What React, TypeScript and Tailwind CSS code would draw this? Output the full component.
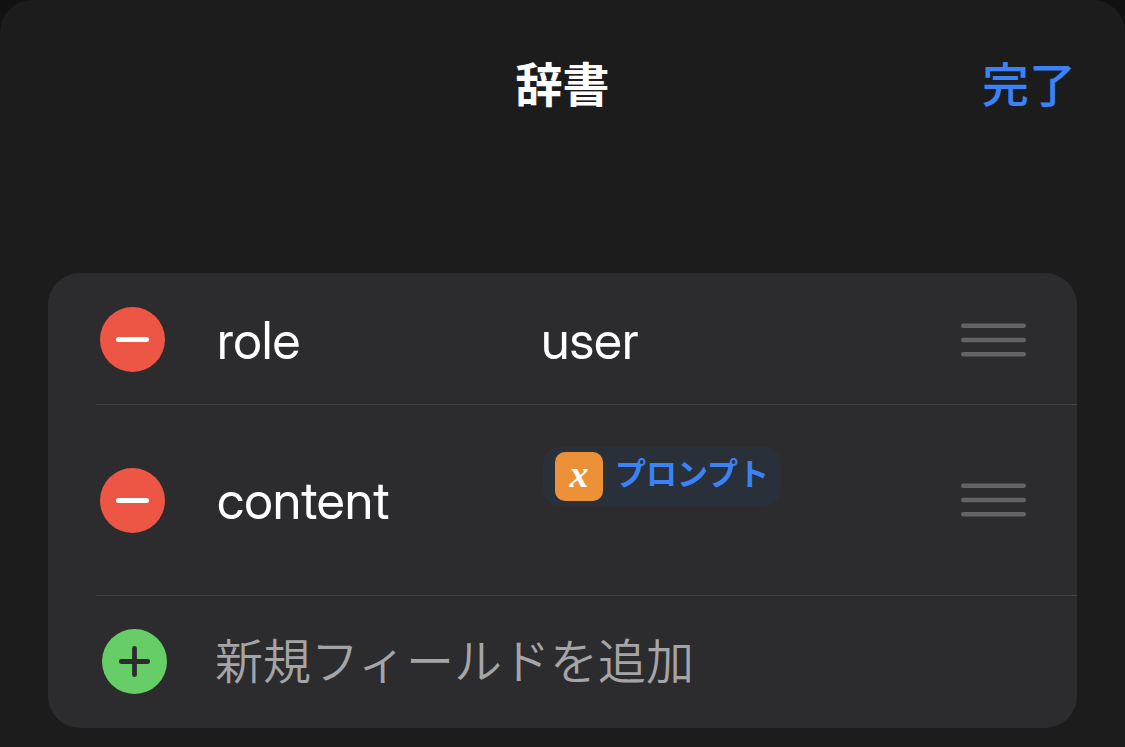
import React from "react";

type Field = {
  key: string;
  value: string;
  isVariable?: boolean;
};

const fields: Field[] = [
  { key: "role", value: "user" },
  { key: "content", value: "プロンプト", isVariable: true },
];

function MinusBadge() {
  return (
    <svg viewBox="0 0 65 65" className="block size-[65px]" aria-hidden="true">
      <circle cx="32.5" cy="32.5" r="32.5" fill="#ed5545" />
      <rect x="16" y="30" width="33" height="5" rx="2.5" fill="#fff" />
    </svg>
  );
}

function PlusBadge() {
  return (
    <svg viewBox="0 0 65 65" className="block size-[65px]" aria-hidden="true">
      <circle cx="32.5" cy="32.5" r="32.5" fill="#67ce67" />
      <path
        d="M32.5 19.3v26.4M19.3 32.5h26.4"
        stroke="#2c2c2e"
        strokeWidth="4.8"
        strokeLinecap="round"
      />
    </svg>
  );
}

function DragHandle() {
  return (
    <svg viewBox="0 0 65 34" className="block h-[34px] w-[65px]" aria-hidden="true">
      <g fill="#636366">
        <rect x="0" y="0.5" width="65" height="4.4" rx="2.2" />
        <rect x="0" y="14.8" width="65" height="4.4" rx="2.2" />
        <rect x="0" y="29.1" width="65" height="4.4" rx="2.2" />
      </g>
    </svg>
  );
}

// Inline token for a variable used as a field value
function VariableChip({ name }: { name: string }) {
  return (
    <button
      type="button"
      className="flex items-center gap-3 rounded-2xl bg-[#29303a] py-[5px] pr-3 pl-3"
    >
      <span className="flex h-[49px] w-12 items-center justify-center rounded-[10px] bg-[#ed9138] pb-1 font-['Liberation_Serif',serif] text-[38px] leading-none font-bold text-white italic">
        x
      </span>
      <span className="pb-1 text-[31px] leading-11 font-bold text-[#3b82f7]">{name}</span>
    </button>
  );
}

function FieldRow({ field }: { field: Field }) {
  return (
    <li
      className={
        field.isVariable
          ? "ml-12 flex h-[191px] items-center border-b border-[#444446] pr-[51px] pl-1"
          : "ml-12 flex h-[132px] items-center border-b border-[#444446] pt-0.5 pr-[51px] pl-1"
      }
    >
      <button type="button" aria-label={`${field.key} を削除`} className="shrink-0">
        <MinusBadge />
      </button>
      <input
        type="text"
        aria-label="キー"
        defaultValue={field.key}
        className="ml-[52px] h-16 w-[324px] min-w-0 bg-transparent pt-0.5 text-[52px] text-white outline-none"
      />
      <div className="min-w-0 flex-1">
        {field.isVariable ? (
          <div className="flex pb-12 pl-0.5">
            <VariableChip name={field.value} />
          </div>
        ) : (
          <input
            type="text"
            aria-label="値"
            defaultValue={field.value}
            className="block h-16 w-full bg-transparent pt-0.5 text-[52px] text-white outline-none"
          />
        )}
      </div>
      <button type="button" aria-label={`${field.key} を並べ替え`} className="shrink-0">
        <DragHandle />
      </button>
    </li>
  );
}

export default function App() {
  return (
    <div className="min-h-screen bg-[#111111] font-['Inter_Display',Inter,'Noto_Sans_CJK_JP',sans-serif]">
      <main className="min-h-screen rounded-t-[32px] bg-[#1c1c1c] px-12 pb-5">
        <header className="grid grid-cols-[1fr_auto_1fr] items-center pt-[51px]">
          <h1 className="col-start-2 text-[47px] leading-[68px] font-bold text-white">
            辞書
          </h1>
          <button
            type="button"
            className="mr-px justify-self-end text-[47px] leading-[68px] font-medium text-[#3b82f7]"
          >
            完了
          </button>
        </header>

        <ul className="mt-[154px] overflow-hidden rounded-[32px] bg-[#2c2c2e]">
          {fields.map((field) => (
            <FieldRow key={field.key} field={field} />
          ))}
          <li>
            <button
              type="button"
              className="flex h-[132px] w-full items-center gap-12 pb-0.5 pl-[54px] text-left"
            >
              <PlusBadge />
              <span className="pt-0.5 text-5xl font-[350] text-[#a5a5a7]">
                新規フィールドを追加
              </span>
            </button>
          </li>
        </ul>
      </main>
    </div>
  );
}
